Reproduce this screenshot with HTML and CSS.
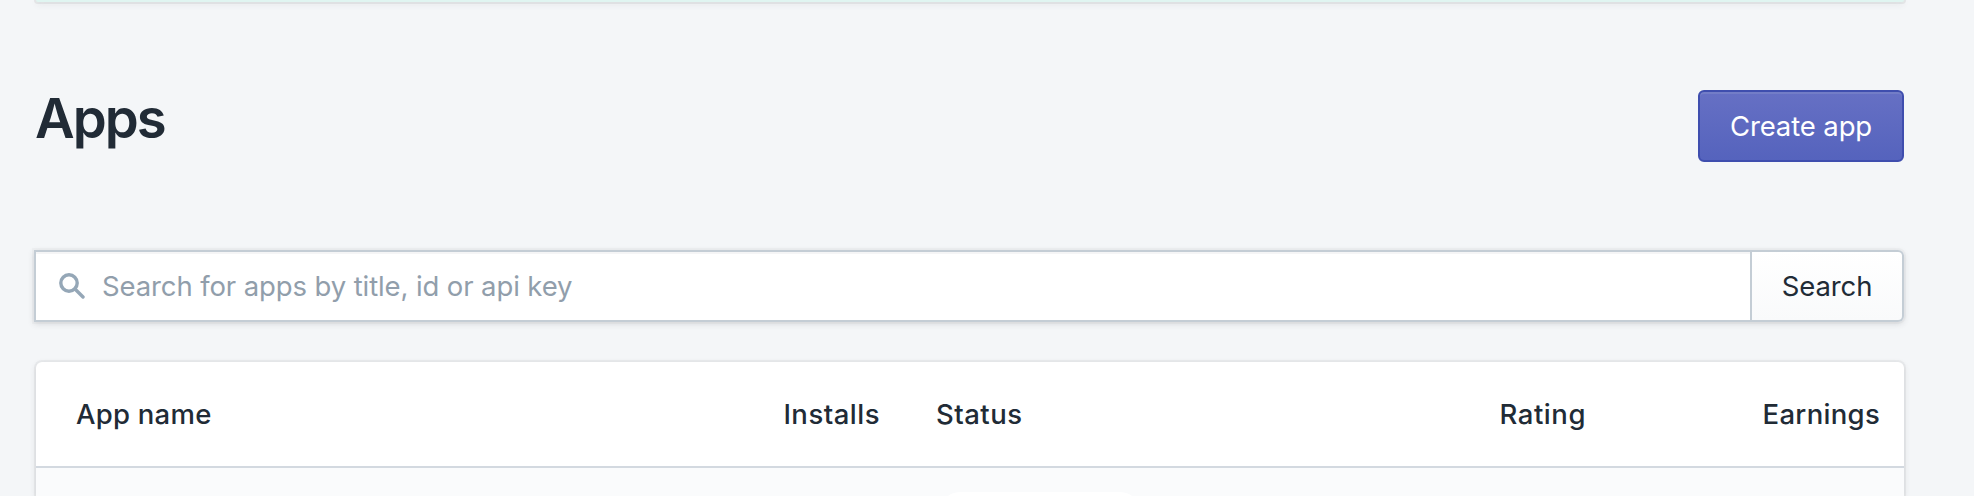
FILE: index.html
```html
<!DOCTYPE html>
<html lang="en">
<head>
<meta charset="utf-8">
<title>Apps</title>
<link rel="stylesheet" href="styles.css">
</head>
<body>
<main class="page">
  <div class="banner"></div>
  <header class="page-header">
    <h1 class="title">Apps</h1>
    <button class="button-primary"><span class="create-label">Create app</span></button>
  </header>
  <form class="search">
    <div class="search-field">
      <svg class="search-icon" viewBox="0 0 26 26" fill="none" stroke="#95a7b7"><circle cx="10" cy="10" r="8.2" stroke-width="3.4"/><path d="M16 16l8 8" stroke-width="3.4" stroke-linecap="round"/></svg>
      <span class="placeholder">Search for apps by title, id or api key</span>
    </div>
    <button class="search-button" type="button"><span class="search-label">Search</span></button>
  </form>
  <section class="card">
    <div class="table-head">
      <span class="col-name">App name</span>
      <span class="col-installs">Installs</span>
      <span class="col-status">Status</span>
      <span class="col-rating">Rating</span>
      <span class="col-earnings">Earnings</span>
    </div>
    <div class="table-row"><div class="badge"></div></div>
  </section>
</main>
</body>
</html>
```
FILE: styles.css
```css
* { box-sizing: border-box; }
body {
  margin: 0;
  background: #f4f6f8;
  color: #212b36;
  font-family: Inter, "Liberation Sans", sans-serif;
  font-size: 27.5px;
  line-height: 40px;
}
button { font: inherit; margin: 0; padding: 0; }
.page {
  display: flex;
  flex-direction: column;
  width: 1872px;
  height: 496px;
  padding: 0 2px;
  margin-left: 34px;
  overflow: clip;
  overflow-clip-margin: 8px;
}
.banner {
  flex: none;
  height: 2px;
  background: #e0f5f1;
  border-radius: 0 0 6px 6px;
  box-shadow: 0 0 0 2px rgba(63,63,68,.08), 0 2px 6px rgba(63,63,68,.15);
}
.page-header {
  display: flex;
  flex: none;
  justify-content: space-between;
  padding-top: 88px;
  height: 248px;
}
.title {
  margin: 0 0 0 -1px;
  font-size: 54.5px;
  font-weight: 600;
  line-height: 56px;
  letter-spacing: -2px;
}
.button-primary {
  width: 206px;
  height: 72px;
  border: 2px solid #3f4eae;
  border-radius: 6px;
  background: linear-gradient(#6670c4, #5563bd);
  box-shadow: inset 0 2px #737dc7;
  color: #fff;
}
.create-label { letter-spacing: -0.12px; }
.search {
  display: flex;
  flex: none;
  width: 1870px;
  height: 72px;
  margin-left: -2px;
  border-radius: 0 6px 6px 0;
  box-shadow: 0 0 0 2px rgba(63,63,68,.03), 0 2px 6px rgba(63,63,68,.15);
}
.search-field {
  display: flex;
  align-items: center;
  width: 1718px;
  padding-left: 23px;
  border: 2px solid #c4cdd5;
  background: #fff;
  box-shadow: inset 0 2px #f5f5f6;
  color: #919eab;
}
.search-icon { width: 26px; height: 26px; margin: -1px 17px 0 0; }
.placeholder { letter-spacing: -0.11px; }
.search-button {
  width: 152px;
  border: 2px solid #c4cdd5;
  border-left: 0;
  border-radius: 0 6px 6px 0;
  background: linear-gradient(#fff, #f9fafb);
  color: #212b36;
}
.search-label { letter-spacing: -0.1px; }
.card {
  flex: 1;
  margin-top: 40px;
  border-radius: 6px 6px 0 0;
  background: #fff;
  box-shadow: 0 0 0 2px rgba(63,63,68,.05), 0 2px 6px rgba(63,63,68,.15);
}
.table-head {
  display: grid;
  grid-template-columns: 680px 124px 536px 170px 294px;
  height: 106px;
  padding: 32px 24px 0 40px;
  border-bottom: 2px solid #d3d9e0;
  font-weight: 500;
}
.col-name { letter-spacing: 0.25px; }
.col-installs { justify-self: end; letter-spacing: 0.5px; }
.col-status { padding-left: 56px; letter-spacing: 0.5px; }
.col-rating { justify-self: end; letter-spacing: 0.55px; }
.col-earnings { justify-self: end; letter-spacing: 0.3px; }
.table-row {
  height: 28px;
  padding: 24px 0 0 904px;
  overflow: hidden;
  background: #fafbfc;
}
.badge { width: 200px; height: 40px; border-radius: 20px; background: #fff; }
```
